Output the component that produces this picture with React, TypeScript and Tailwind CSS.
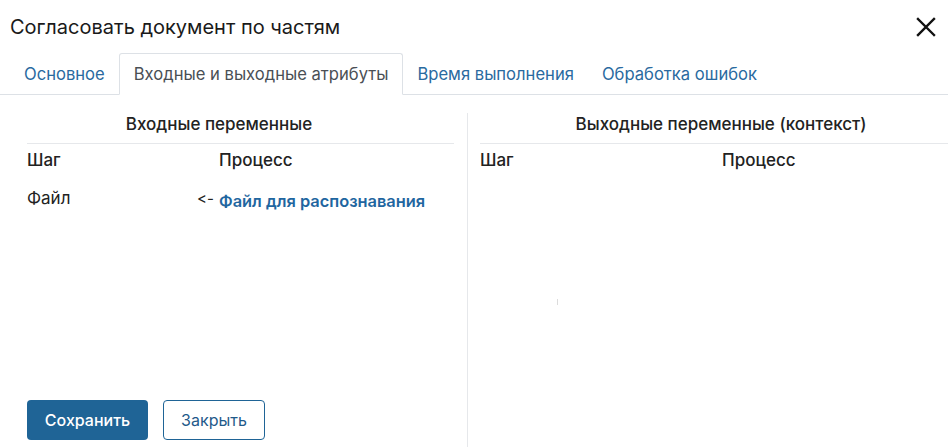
import React from "react";

export default function App() {
  const font = { fontFamily: "Inter, 'Noto Sans', sans-serif", fontFeatureSettings: "'calt' 0, 'liga' 0" };
  return (
    <div className="w-[948px] h-[447px] bg-white overflow-hidden relative text-[#222]" style={font}>
      {/* Header */}
      <div className="flex items-center justify-between h-[54px] pl-[10px] pr-[12px]">
        <div className="text-[20px] leading-none text-[#1a1a1a] -mt-[1px]">Согласовать документ по частям</div>
        <svg width="20" height="20" viewBox="0 0 20 20" className="-mt-[1px]">
          <path d="M2 2 L18 18 M18 2 L2 18" stroke="#111" strokeWidth="2.4" strokeLinecap="square" />
        </svg>
      </div>
      {/* Tabs */}
      <div className="flex items-end h-[41px] border-b border-[#dde1e6] pl-[10px] text-[16.6px]">
        <div className="px-[14px] h-[41px] flex items-center text-[#2a6aa0] pt-[1px]">Основное</div>
        <div className="px-[14px] h-[42px] -mb-[1px] flex items-center bg-white border border-[#dde1e6] border-b-white rounded-t-[3px] text-[#4a4f55] pt-[1px]">
          Входные и выходные атрибуты
        </div>
        <div className="px-[14px] h-[41px] flex items-center text-[#2a6aa0] pt-[1px]">Время выполнения</div>
        <div className="px-[14px] h-[41px] flex items-center text-[#2a6aa0] pt-[1px]">Обработка ошибок</div>
      </div>
      {/* Content */}
      <div className="flex pt-[18px] h-[352px]">
        <div className="w-[468px] shrink-0 border-r border-[#e6e8eb] pl-[27px] pr-[13px] flex flex-col">
          <div className="border-b border-[#e6e8eb] h-[31px]">
            <div className="w-[384px] text-center text-[17px] font-medium text-[#222] leading-[17px] pt-[3px]">Входные переменные</div>
          </div>
          <div className="flex text-[17px] font-medium text-[#222] leading-[20px] pt-[6px] h-[36px]">
            <div className="w-[192px]">Шаг</div>
            <div>Процесс</div>
          </div>
          <div className="flex text-[17px] text-[#222] leading-[20px] pt-[8px]">
            <div className="w-[170px]">Файл</div>
            <div className="w-[22px] text-[15px] pt-[1px]">&lt;-</div>
            <div className="text-[#1f66a0] font-semibold text-[16.4px] pt-[3px]">Файл для распознавания</div>
          </div>
          <div className="mt-auto flex gap-[15px] pb-[7px]">
            <button className="w-[121px] h-[40px] rounded-[4px] bg-[#1f6496] text-white text-[16px] font-medium">Сохранить</button>
            <button className="w-[102px] h-[40px] rounded-[4px] border border-[#1f6496] text-[#1f5a8a] text-[16px] bg-white">Закрыть</button>
          </div>
        </div>
        <div className="flex-1 pl-[12px] flex flex-col relative">
          <div className="border-b border-[#e6e8eb] h-[31px]">
            <div className="w-[482px] text-center text-[17px] font-medium text-[#222] leading-[17px] pt-[3px]">Выходные переменные (контекст)</div>
          </div>
          <div className="flex text-[17px] font-medium text-[#222] leading-[20px] pt-[6px]">
            <div className="w-[242px]">Шаг</div>
            <div>Процесс</div>
          </div>
          <div className="absolute left-[89px] top-[186px] w-[1px] h-[6px] bg-[#dcdcdc]" />
        </div>
      </div>
    </div>
  );
}
